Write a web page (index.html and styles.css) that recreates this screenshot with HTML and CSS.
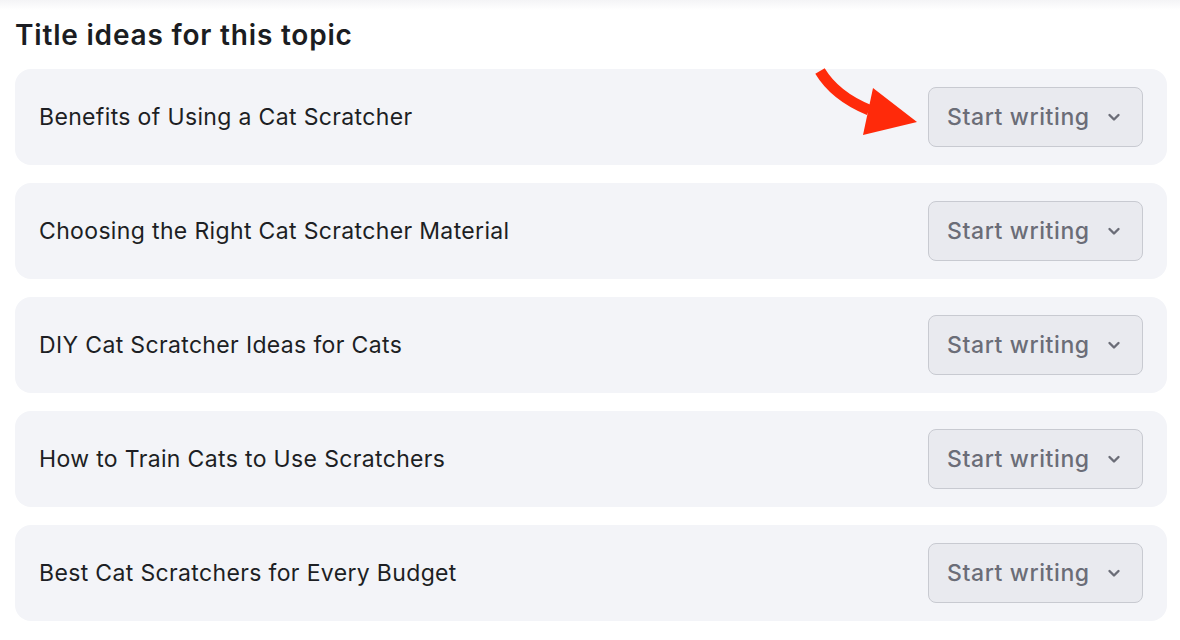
FILE: index.html
```html
<!DOCTYPE html>
<html>
<head>
<meta charset="utf-8">
<link rel="stylesheet" href="styles.css">
</head>
<body>
<div class="topshade"></div>
<main class="panel">
  <h2 class="heading">Title ideas for this topic</h2>
  <ul class="ideas">
    <li class="idea">
      <span class="idea-title">Benefits of Using a Cat Scratcher</span>
      <button class="start">Start writing <svg class="chev" viewBox="0 0 14 9" width="14" height="9"><path d="M2.5 2l4.5 4.5 4.5-4.5" fill="none" stroke="currentColor" stroke-width="2.4" stroke-linecap="round" stroke-linejoin="round"/></svg></button>
    </li>
    <li class="idea">
      <span class="idea-title">Choosing the Right Cat Scratcher Material</span>
      <button class="start">Start writing <svg class="chev" viewBox="0 0 14 9" width="14" height="9"><path d="M2.5 2l4.5 4.5 4.5-4.5" fill="none" stroke="currentColor" stroke-width="2.4" stroke-linecap="round" stroke-linejoin="round"/></svg></button>
    </li>
    <li class="idea">
      <span class="idea-title">DIY Cat Scratcher Ideas for Cats</span>
      <button class="start">Start writing <svg class="chev" viewBox="0 0 14 9" width="14" height="9"><path d="M2.5 2l4.5 4.5 4.5-4.5" fill="none" stroke="currentColor" stroke-width="2.4" stroke-linecap="round" stroke-linejoin="round"/></svg></button>
    </li>
    <li class="idea">
      <span class="idea-title">How to Train Cats to Use Scratchers</span>
      <button class="start">Start writing <svg class="chev" viewBox="0 0 14 9" width="14" height="9"><path d="M2.5 2l4.5 4.5 4.5-4.5" fill="none" stroke="currentColor" stroke-width="2.4" stroke-linecap="round" stroke-linejoin="round"/></svg></button>
    </li>
    <li class="idea">
      <span class="idea-title">Best Cat Scratchers for Every Budget</span>
      <button class="start">Start writing <svg class="chev" viewBox="0 0 14 9" width="14" height="9"><path d="M2.5 2l4.5 4.5 4.5-4.5" fill="none" stroke="currentColor" stroke-width="2.4" stroke-linecap="round" stroke-linejoin="round"/></svg></button>
    </li>
  </ul>
</main>
<svg class="pointer" viewBox="0 0 120 80" width="120" height="80">
  <path d="M15 11 Q30 36 64 50" fill="none" stroke="#ff2a0a" stroke-width="11"/>
  <polygon points="68,28 112,62 58,75" fill="#ff2a0a"/>
</svg>
</body>
</html>
```

FILE: styles.css
```css
html, body {
  margin: 0;
  padding: 0;
  background: #ffffff;
}
body {
  width: 1180px;
  height: 640px;
  overflow: hidden;
  position: relative;
  font-family: Inter, "Noto Sans", sans-serif;
}
.topshade {
  height: 10px;
  background: linear-gradient(#f4f4f6, #ffffff);
}
.panel {
  padding: 0 13px 0 15px;
}
.heading {
  margin: 7px 0 0 0;
  font-size: 28px;
  line-height: 36px;
  font-weight: 600;
  color: #1b1d22;
  letter-spacing: 0.8px;
}
.ideas {
  list-style: none;
  margin: 16px 0 0 0;
  padding: 0;
  display: flex;
  flex-direction: column;
  gap: 18px;
}
.idea {
  height: 96px;
  box-sizing: border-box;
  background: #f3f4f8;
  border-radius: 16px;
  display: flex;
  align-items: center;
  justify-content: space-between;
  padding: 0 24px;
}
.idea-title {
  font-size: 23px;
  color: #1d1f24;
  font-weight: 400;
  letter-spacing: 0.35px;
}
.start {
  height: 60px;
  width: 215px;
  box-sizing: border-box;
  background: #e9eaef;
  border: 1px solid #c8cad1;
  border-radius: 8px;
  font-family: inherit;
  font-size: 23px;
  font-weight: 500;
  letter-spacing: 0.6px;
  color: #6b6d77;
  display: flex;
  align-items: center;
  padding: 0 0 0 18px;
  gap: 17px;
}
.chev {
  display: block;
  color: #6b6d77;
}
.pointer {
  position: absolute;
  left: 805px;
  top: 60px;
}
```
